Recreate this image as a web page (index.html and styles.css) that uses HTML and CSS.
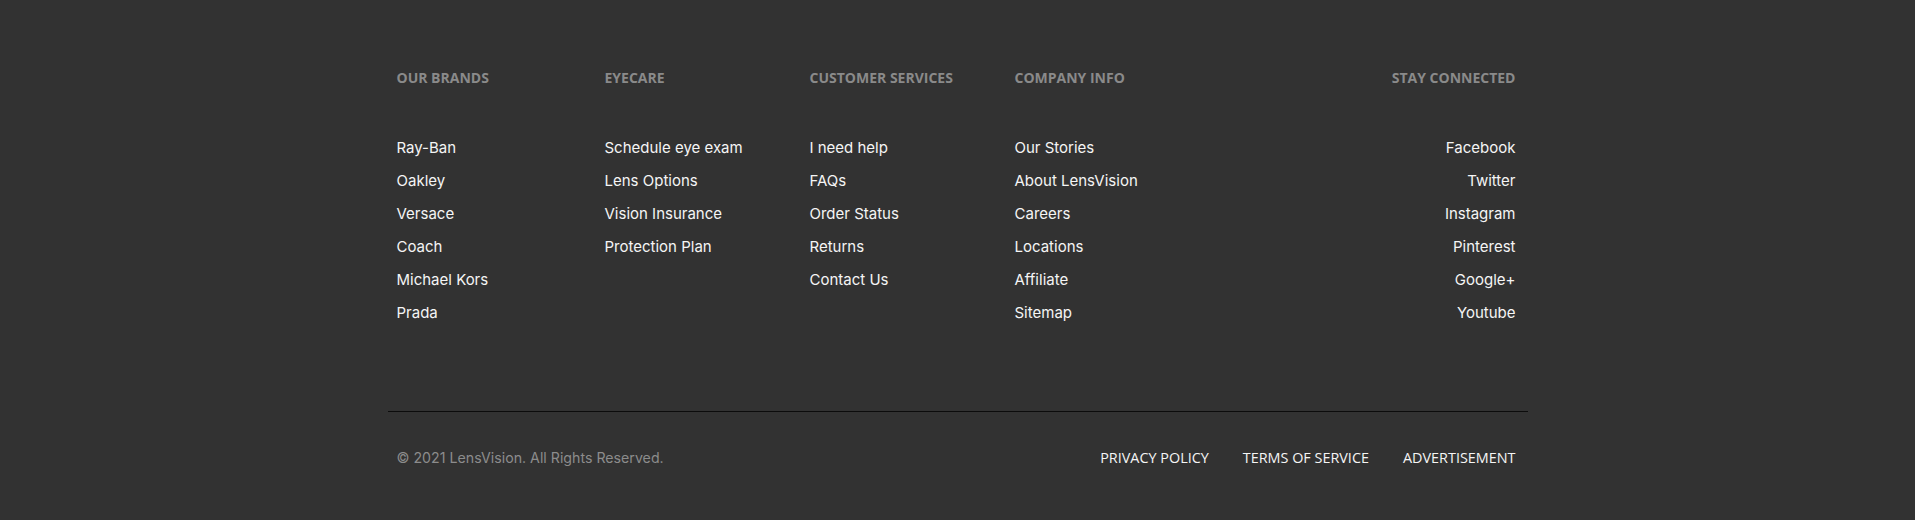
FILE: index.html
```html
<!DOCTYPE html>
<html lang="en">
<head>
<meta charset="utf-8">
<title>LensVision Footer</title>
<link rel="stylesheet" href="styles.css">
</head>
<body>
<footer class="footer">
  <div class="container">
    <div class="columns">
      <div class="col">
        <h4 class="col-title">OUR BRANDS</h4>
        <ul class="links">
          <li><a href="#">Ray-Ban</a></li>
          <li><a href="#">Oakley</a></li>
          <li><a href="#">Versace</a></li>
          <li><a href="#">Coach</a></li>
          <li><a href="#">Michael Kors</a></li>
          <li><a href="#">Prada</a></li>
        </ul>
      </div>
      <div class="col">
        <h4 class="col-title">EYECARE</h4>
        <ul class="links">
          <li><a href="#">Schedule eye exam</a></li>
          <li><a href="#">Lens Options</a></li>
          <li><a href="#">Vision Insurance</a></li>
          <li><a href="#">Protection Plan</a></li>
        </ul>
      </div>
      <div class="col">
        <h4 class="col-title">CUSTOMER SERVICES</h4>
        <ul class="links">
          <li><a href="#">I need help</a></li>
          <li><a href="#">FAQs</a></li>
          <li><a href="#">Order Status</a></li>
          <li><a href="#">Returns</a></li>
          <li><a href="#">Contact Us</a></li>
        </ul>
      </div>
      <div class="col">
        <h4 class="col-title">COMPANY INFO</h4>
        <ul class="links">
          <li><a href="#">Our Stories</a></li>
          <li><a href="#">About LensVision</a></li>
          <li><a href="#">Careers</a></li>
          <li><a href="#">Locations</a></li>
          <li><a href="#">Affiliate</a></li>
          <li><a href="#">Sitemap</a></li>
        </ul>
      </div>
      <div class="col col-right">
        <h4 class="col-title">STAY CONNECTED</h4>
        <ul class="links">
          <li><a href="#">Facebook</a></li>
          <li><a href="#">Twitter</a></li>
          <li><a href="#">Instagram</a></li>
          <li><a href="#">Pinterest</a></li>
          <li><a href="#">Google+</a></li>
          <li><a href="#">Youtube</a></li>
        </ul>
      </div>
    </div>
    <div class="bottom">
      <p class="copyright">© 2021 LensVision. All Rights Reserved.</p>
      <nav class="legal">
        <a href="#">PRIVACY POLICY</a>
        <a href="#">TERMS OF SERVICE</a>
        <a href="#">ADVERTISEMENT</a>
      </nav>
    </div>
  </div>
</footer>
</body>
</html>
```

FILE: styles.css
```css
* { box-sizing: border-box; }
html, body {
  margin: 0;
  padding: 0;
  background: #323232;
}
body {
  height: 520px;
  font-family: "Inter", "Liberation Sans", sans-serif;
}
.footer {
  background: #323232;
  padding-top: 68px;
}
.container {
  width: 1140px;
  margin: 0 auto;
}
.columns {
  display: grid;
  grid-template-columns: 208px 205px 205px 1fr 1fr;
  padding: 0 12px 0 9px;
}
.col-title {
  margin: 0;
  font-family: "Open Sans", sans-serif;
  font-weight: 700;
  font-size: 14px;
  line-height: 20px;
  color: #8a8a8a;
}
.links {
  list-style: none;
  margin: 43px 0 0;
  padding: 0;
}
.links li {
  height: 33px;
  line-height: 33px;
  font-size: 15px;
}
.links a {
  color: #f5f5f5;
  text-decoration: none;
}
.col-right {
  text-align: right;
}
.bottom {
  margin-top: 82px;
  border-top: 1px solid #0c0c0c;
  display: flex;
  justify-content: space-between;
  align-items: center;
  padding: 34px 12px 0 9px;
}
.copyright {
  margin: 0;
  font-size: 14.2px;
  line-height: 24px;
  color: #8c8c8c;
}
.legal {
  display: flex;
  gap: 34px;
}
.legal a {
  font-family: "Open Sans", sans-serif;
  font-size: 14.4px;
  line-height: 24px;
  color: #f5f5f5;
  text-decoration: none;
}
```
